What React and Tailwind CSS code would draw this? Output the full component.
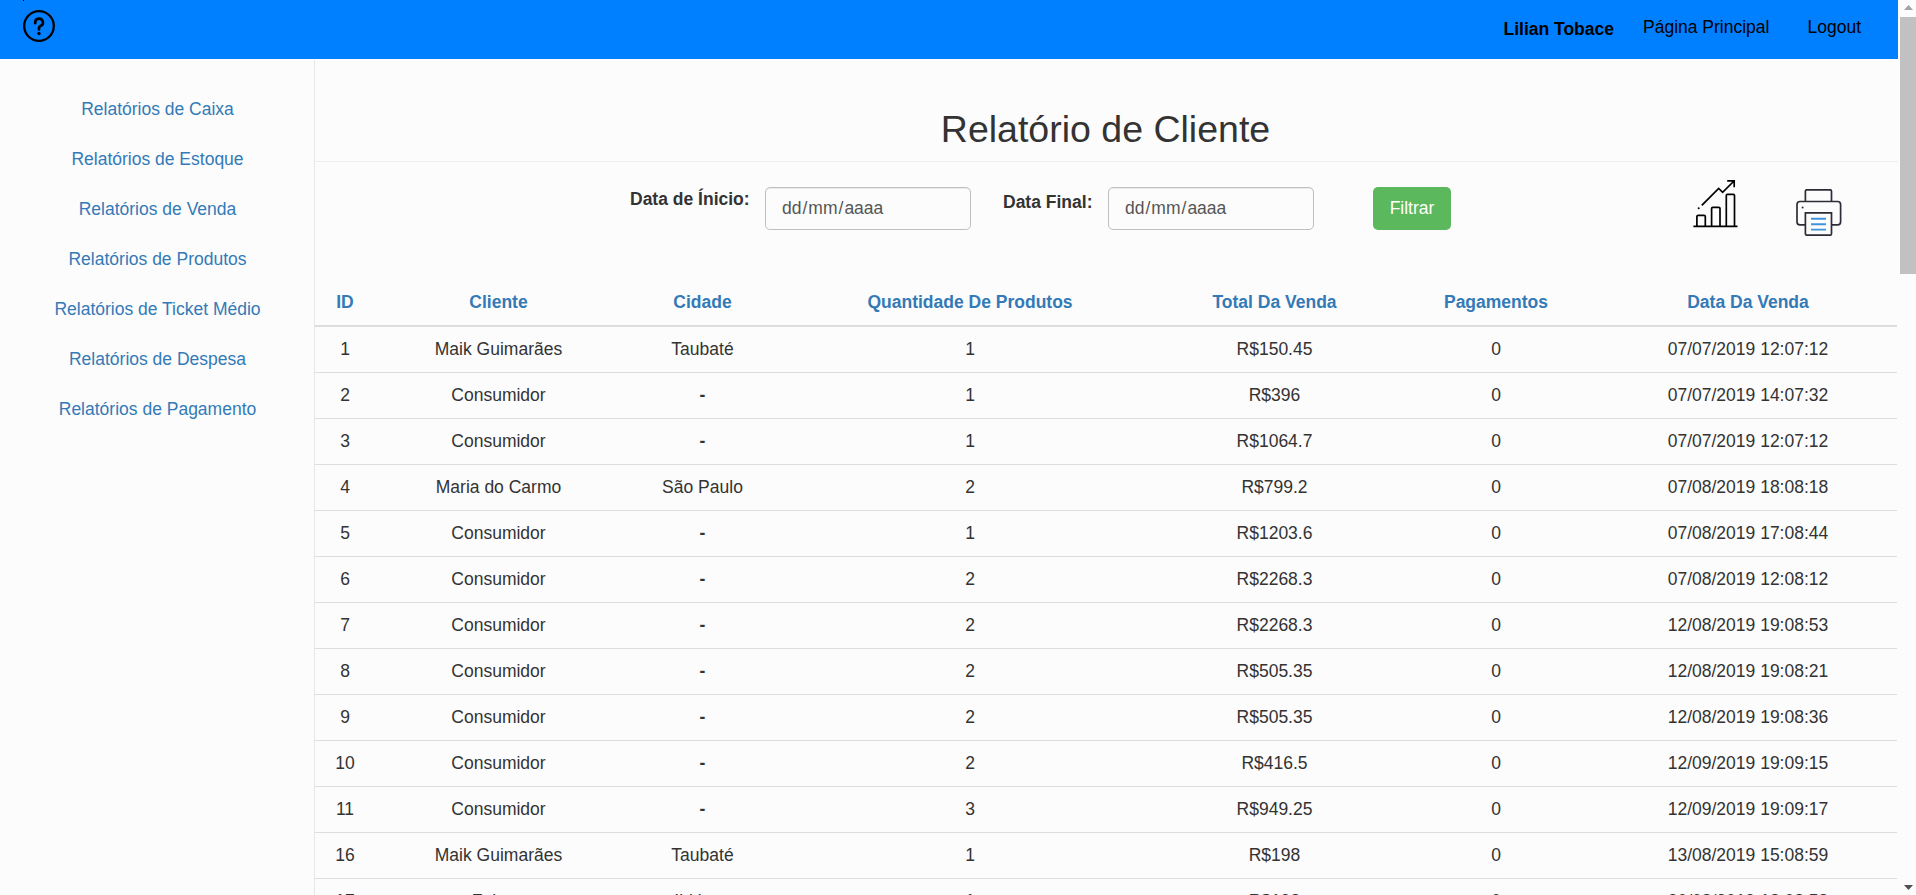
import React from "react";

const links = [
  "Relatórios de Caixa",
  "Relatórios de Estoque",
  "Relatórios de Venda",
  "Relatórios de Produtos",
  "Relatórios de Ticket Médio",
  "Relatórios de Despesa",
  "Relatórios de Pagamento",
];

const columns = ["ID", "Cliente", "Cidade", "Quantidade De Produtos", "Total Da Venda", "Pagamentos", "Data Da Venda"];

const rows = [
  ["1", "Maik Guimarães", "Taubaté", "1", "R$150.45", "0", "07/07/2019 12:07:12"],
  ["2", "Consumidor", "-", "1", "R$396", "0", "07/07/2019 14:07:32"],
  ["3", "Consumidor", "-", "1", "R$1064.7", "0", "07/07/2019 12:07:12"],
  ["4", "Maria do Carmo", "São Paulo", "2", "R$799.2", "0", "07/08/2019 18:08:18"],
  ["5", "Consumidor", "-", "1", "R$1203.6", "0", "07/08/2019 17:08:44"],
  ["6", "Consumidor", "-", "2", "R$2268.3", "0", "07/08/2019 12:08:12"],
  ["7", "Consumidor", "-", "2", "R$2268.3", "0", "12/08/2019 19:08:53"],
  ["8", "Consumidor", "-", "2", "R$505.35", "0", "12/08/2019 19:08:21"],
  ["9", "Consumidor", "-", "2", "R$505.35", "0", "12/08/2019 19:08:36"],
  ["10", "Consumidor", "-", "2", "R$416.5", "0", "12/09/2019 19:09:15"],
  ["11", "Consumidor", "-", "3", "R$949.25", "0", "12/09/2019 19:09:17"],
  ["16", "Maik Guimarães", "Taubaté", "1", "R$198", "0", "13/08/2019 15:08:59"],
  ["17", "Fulano", "Ibitinga", "1", "R$198", "0", "20/08/2019 18:08:58"],
];

const grid = "grid w-[1582px] grid-cols-[60px_247px_161px_374px_235px_208px_296px]";

function HelpIcon() {
  return (
    <svg className="block" width="32" height="42" viewBox="0 -10 32 42" fill="none" stroke="#000" strokeWidth="2.300" strokeLinecap="round">
      <path d="M-1-10h2v1h-2z" fill="#000" stroke="none" />
      <circle cx="16" cy="16" r="14.800" />
      <path d="M12.200 13.200v-.7a3.850 3.850 0 1 1 5.300 3.600c-1 .4-1.500.9-1.500 1.900V19.500" strokeWidth="2.700" strokeLinejoin="round" />
      <circle cx="16" cy="23.500" r="1.700" fill="#000" stroke="none" />
    </svg>
  );
}

function ChartIcon() {
  return (
    <svg className="block" width="45" height="48" viewBox="0 0 45 48" fill="none" stroke="#000" strokeWidth="1.700">
      <path d="M.4 46.300H44.500" />
      <path d="M3.900 46.300V36.500q0-1.200 1.200-1.200h6q1.200 0 1.200 1.200v10M18.600 46.300v-17.800q0-1.200 1.200-1.200h6q1.200 0 1.200 1.200v18M33.300 46.300v-30.800q0-1.200 1.200-1.200h5.800q1.200 0 1.200 1.200v31" />
      <path d="M8.800 25.400 25.700 8.500l3.900 3.900L41 1M34.200.9h7v6.300" />
      <circle cx="5.700" cy="28.200" r="1" fill="#000" stroke="none" />
    </svg>
  );
}

function PrinterIcon() {
  return (
    <svg className="block" width="46" height="47" viewBox="0 0 46 47" fill="none" stroke="#2d2d38" strokeWidth="1.700">
      <path d="M9.400 12.500V2.200q0-1.400 1.400-1.400h23.300q1.400 0 1.400 1.400V12.500" />
      <path d="M9.400 35.900H4q-3-.2-3-3V15.500q0-3 3-3h37.600q3 0 3 3v17.400q0 2.800-3 3h-6" />
      <path d="M9.400 23.900H35.500V44.700q0 1.500-1.400 1.500H10.800q-1.400 0-1.400-1.500z" />
      <circle cx="6.600" cy="18.500" r="1" fill="#2d2d38" stroke="none" />
      <path d="M15 29.800h15M15 35.200h15M15 40.600h15" stroke="#3d93dc" strokeWidth="1.900" />
    </svg>
  );
}

function DateField() {
  return (
    <div className="h-[43px] w-[206px] rounded-[5px] border border-[#c0c0c0] pl-[15px] text-[17.5px] leading-[41px] text-[#555] shadow-[inset_0_1px_1px_rgba(0,0,0,0.075)]">
      <span className="px-px">dd</span>/<span className="px-px">mm</span>/<span className="px-px">aaaa</span>
    </div>
  );
}

export default function App() {
  return (
    <div className="flex h-[895px] w-[1916px] overflow-hidden bg-[#fcfcfc] font-['Liberation_Sans',Arial,sans-serif] text-[17.5px] leading-[25px] text-[#333]">
      <div className="flex w-[1898px] shrink-0 flex-col">
        <header className="flex h-[59px] shrink-0 items-start bg-[#007fff] pl-[23px] text-black">
          <HelpIcon />
          <div className="ml-auto flex pr-[37px]">
            <b className="mr-[29px] pt-[17px]">Lilian Tobace</b>
            <a className="mr-[38px] pt-[15px]">Página Principal</a>
            <a className="pt-[15px]">Logout</a>
          </div>
        </header>
        <div className="flex min-h-0 flex-1 pt-px">
          <nav className="flex w-[314px] shrink-0 flex-col gap-[25px] pl-px pt-[37px] text-center text-[#337ab7]">
            {links.map((l) => <a key={l}>{l}</a>)}
          </nav>
          <main className="flex min-w-0 flex-1 flex-col overflow-hidden border-l border-[#e7e7e7]">
            <h1 className="h-[102px] shrink-0 border-b border-[#eee] pr-[2px] pt-[49px] text-center text-[37.5px] leading-[41px]">Relatório de Cliente</h1>
            <div className="flex h-[116px] shrink-0 items-start pl-[315px] pt-[25px]">
              <b className="w-[135px] whitespace-nowrap">Data de Ínicio:</b>
              <DateField />
              <b className="ml-[32px] w-[105px] whitespace-nowrap pt-[3px]">Data Final:</b>
              <DateField />
              <button className="ml-[59px] h-[43px] w-[78px] rounded-[5px] bg-[#5cb85c] text-white">Filtrar</button>
              <div className="-mt-[7px] ml-[242px]"><ChartIcon /></div>
              <div className="ml-[58px] mt-[2px]"><PrinterIcon /></div>
            </div>
            <div className={grid + " h-[49px] shrink-0 border-b-2 border-[#ddd] pt-[12px] text-center font-bold text-[#337ab7]"}>
              {columns.map((c) => <div key={c}>{c}</div>)}
            </div>
            {rows.map((r, i) => (
              <div key={i} className={grid + " h-[46px] shrink-0 border-b border-[#ddd] pt-[10px] text-center"}>
                {r.map((c, j) => <div key={j} className={c === "-" ? "font-bold" : ""}>{c}</div>)}
              </div>
            ))}
          </main>
        </div>
      </div>
      <div className="ml-[2px] flex w-4 flex-col items-center bg-[#fcfcfc]">
        <svg className="shrink-0" width="16" height="17" viewBox="0 0 16 17"><path d="M4 10 8.500 5 13 10z" fill="#a3a3a3" /></svg>
        <div className="h-[257px] w-4 shrink-0 bg-[#c1c1c1]" />
        <svg className="mt-auto shrink-0" width="16" height="17" viewBox="0 0 16 17"><path d="M4 7h9l-4.500 5z" fill="#505050" /></svg>
      </div>
    </div>
  );
}
